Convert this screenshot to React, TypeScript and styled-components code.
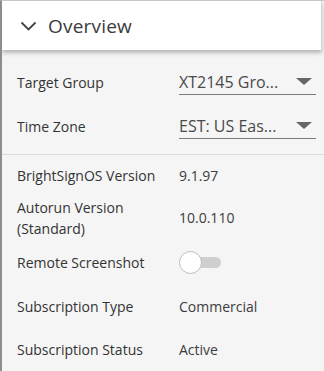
import * as React from 'react';
import styled, { createGlobalStyle } from 'styled-components';

const GlobalStyle = createGlobalStyle`
  html, body {
    margin: 0;
    padding: 0;
    background: #f5f5f5;
  }
  body {
    font-family: 'Open Sans', 'Noto Sans', sans-serif;
    color: #333;
  }
`;

const Panel = styled.div`
  width: 324px;
  height: 371px;
  box-sizing: border-box;
  background: #f5f5f5;
  border-left: 2px solid #8c8c8c;
  border-top: 1px solid #c8c8c8;
  overflow: hidden;
`;

const Header = styled.div`
  display: flex;
  align-items: center;
  gap: 10px;
  height: 49px;
  width: 320px;
  padding-left: 17px;
  box-sizing: border-box;
  background: #fff;
  border-right: 1px solid #d6d6d6;
  box-shadow: 0 3px 4px rgba(0, 0, 0, 0.25);
  position: relative;
  z-index: 1;
`;

const Title = styled.span`
  font-size: 19px;
  color: #3a3a3a;
  letter-spacing: 0.2px;
`;

const Section = styled.div<{ $top: number }>`
  display: flex;
  flex-direction: column;
  padding: ${(p) => p.$top}px 0 0 15px;
`;

const Divider = styled.div`
  height: 1px;
  background: #dcdcdc;
  margin-top: 6px;
`;

const Row = styled.div<{ $h: number }>`
  display: grid;
  grid-template-columns: 162px 1fr;
  align-items: center;
  height: ${(p) => p.$h}px;
  font-size: 14px;
  color: #333;
  padding-right: 8px;
`;

const Label = styled.div`
  line-height: 21px;
`;

const Value = styled.div`
  color: #3c3c3c;
`;

const Select = styled.div`
  display: flex;
  align-items: center;
  justify-content: space-between;
  height: 24px;
  line-height: 24px;
  border-bottom: 1px solid #7a7a7a;
  font-size: 16px;
  color: #4a4a4a;
  padding-right: 4px;
`;

const Arrow = styled.span`
  width: 0;
  height: 0;
  border-left: 8px solid transparent;
  border-right: 8px solid transparent;
  border-top: 7px solid #666;
`;

const Toggle = styled.div`
  position: relative;
  width: 42px;
  height: 23px;
`;

const Track = styled.div`
  position: absolute;
  left: 1px;
  top: 6px;
  width: 41px;
  height: 11px;
  border-radius: 6px;
  background: #cfcfcf;
`;

const Knob = styled.div`
  position: absolute;
  left: 0;
  top: 0;
  width: 21px;
  height: 21px;
  border-radius: 50%;
  background: #fff;
  border: 1px solid #bdbdbd;
`;

const Chevron = () => (
  <svg width="19" height="18" viewBox="0 0 19 18">
    <path d="M2.5 5.5 L9.5 12.5 L16.5 5.5" fill="none" stroke="#444" strokeWidth="1.8" />
  </svg>
);

export default function App() {
  return (
    <>
      <GlobalStyle />
      <Panel>
        <Header>
          <Chevron />
          <Title>Overview</Title>
        </Header>
        <Section $top={10}>
          <Row $h={44}>
            <Label>Target Group</Label>
            <Select>
              <span>XT2145 Gro...</span>
              <Arrow />
            </Select>
          </Row>
          <Row $h={44}>
            <Label>Time Zone</Label>
            <Select>
              <span>EST: US Eas...</span>
              <Arrow />
            </Select>
          </Row>
        </Section>
        <Divider />
        <Section $top={5}>
          <Row $h={31}>
            <Label>BrightSignOS Version</Label>
            <Value>9.1.97</Value>
          </Row>
          <Row $h={53}>
            <Label>
              Autorun Version
              <br />
              (Standard)
            </Label>
            <Value>10.0.110</Value>
          </Row>
          <Row $h={37}>
            <Label>Remote Screenshot</Label>
            <Toggle>
              <Track />
              <Knob />
            </Toggle>
          </Row>
          <Row $h={50}>
            <Label>Subscription Type</Label>
            <Value>Commercial</Value>
          </Row>
          <Row $h={36}>
            <Label>Subscription Status</Label>
            <Value>Active</Value>
          </Row>
        </Section>
      </Panel>
    </>
  );
}
